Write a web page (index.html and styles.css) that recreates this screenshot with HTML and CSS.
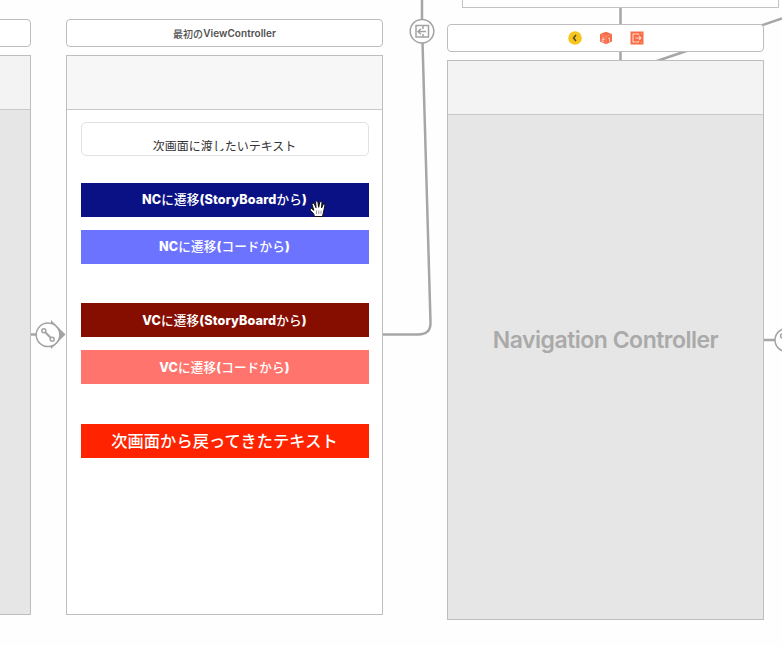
FILE: index.html
```
<!DOCTYPE html>
<html lang="ja">
<head>
<meta charset="utf-8">
<title>Storyboard</title>
<link rel="stylesheet" href="styles.css">
</head>
<body>
<main class="canvas">
  <svg class="connections" viewBox="0 0 782 646" fill="none" stroke="#a6a6a6" stroke-width="2.5">
    <path d="M422 0V20M422.5 42L430.5 322Q431 334.500 418 334.500H382"/>
    <path d="M620.500 7V62M654 62L782 18.500M30 334.500H37M763 340H775"/>
  </svg>

  <section class="scene scene-left">
    <header class="titlebar"></header>
    <div class="screen gray"><div class="navbar"></div></div>
  </section>

  <section class="scene scene-first">
    <header class="titlebar"><span class="jp">最初の</span>ViewController</header>
    <div class="screen">
      <div class="navbar pale"></div>
      <div class="content">
        <div class="field"><div class="clip">次画面に渡したいテキスト</div></div>
        <div class="button navy"><span>NC<span class="jp">に遷移</span>(StoryBoard<span class="jp">から</span>)</span></div>
        <div class="button blue"><span>NC<span class="jp">に遷移</span>(<span class="jp">コードから</span>)</span></div>
        <div class="button maroon"><span>VC<span class="jp">に遷移</span>(StoryBoard<span class="jp">から</span>)</span></div>
        <div class="button pink"><span>VC<span class="jp">に遷移</span>(<span class="jp">コードから</span>)</span></div>
        <div class="button red">次画面から戻ってきたテキスト</div>
      </div>
    </div>
  </section>

  <section class="scene scene-above"></section>

  <section class="scene scene-nav">
    <header class="titlebar icons">
      <svg width="14" height="14" viewBox="0 0 14 14"><circle cx="7" cy="7" r="6.800" fill="#f7c51e"/><path d="M8 4L5.500 7L8 10" fill="none" stroke="#514b32" stroke-width="1.500"/></svg>
      <svg width="14" height="14" viewBox="0 0 14 14"><path d="M7 .8L13 3V10.500L7 13.200L1 10.500V3Z" fill="#f66c48"/><path d="M1.500 3.500L7 5.500L12.500 3.500M7 5.500V13" fill="none" stroke="#fa9c83" stroke-width=".7"/><path d="M3 6.500L5 7.200V9L3 8.300V10.200L5 11M9 7.500L10.500 7V11" fill="none" stroke="#ffd0c2" stroke-width=".9"/></svg>
      <svg width="14" height="14" viewBox="0 0 14 14"><path d="M.5 .5H13.500V13.500H.5Z" fill="#f76b45"/><path d="M8.500 4V3H3V11H8.500V10M5.500 7H11M9 5L11 7L9 9" fill="none" stroke="#ffd8cb" stroke-width="1.100"/><path d="M11 2.500H12M11 11.500H12" stroke="#fbc47a"/></svg>
    </header>
    <div class="screen gray"><div class="navbar"></div><h1>Navigation Controller</h1></div>
  </section>

  <svg class="segues" viewBox="0 0 782 646" fill="none" stroke="#a3a3a3" stroke-width="1.500">
    <circle cx="422" cy="31.200" r="11.800" fill="#fff"/>
    <path d="M416 25.500H428.500V37H416ZM423 25.500V29M423 34V37M426 31.500H418M421 28.700L418 31.500L421 34.300"/>
    <path d="M51 320L65.500 334.500L51 349Z" fill="#a3a3a3" stroke="none"/>
    <circle cx="48" cy="334.800" r="11.800" fill="#fff"/>
    <circle cx="43.800" cy="330.800" r="2"/><circle cx="52.200" cy="339.200" r="2"/>
    <path d="M45.300 332.300L50.700 337.700" stroke-width="2"/>
    <circle cx="786.500" cy="340" r="11.500" fill="#fff"/><circle cx="782.500" cy="336" r="2"/>
  </svg>
  <svg class="hand" width="18" height="18" viewBox="0 0 18 18">
    <path d="M5.500 16.500L4.500 13.500L1.200 10.300Q.6 8.300 2.500 8.500L4.800 10.300L3 4.300Q3.100 2.300 5 3.200L7 7.700L6.600 2Q7.500 .3 8.900 1.900L9.700 7.300L10.800 2Q12 .8 13 2.300L12.500 8L14.300 4.200Q15.700 3.400 16 5L14.200 13.500L13.500 16.500Z" fill="#fff" stroke="#111" stroke-width="1" stroke-linejoin="round"/>
    <path d="M7.500 10.500V14M9.800 10.500V14M12 10.500V14" stroke="#777" stroke-width=".7"/>
  </svg>
</main>
</body>
</html>
```
FILE: styles.css
```
* { box-sizing: border-box; }
body { margin: 0; background: #fff; font-family: Inter, "Noto Sans CJK JP", sans-serif; }
.canvas { position: relative; width: 782px; height: 646px; overflow: hidden; background: #fefefe; }
.connections, .segues { position: absolute; left: 0; top: 0; width: 782px; height: 646px; }
.scene { position: absolute; width: 317px; display: flex; flex-direction: column; gap: 8px; }
.scene-left { left: -286px; top: 19px; }
.scene-first { left: 66px; top: 19px; }
.scene-nav { left: 447px; top: 24px; }
.scene-above { left: 462px; top: -10px; width: 317px; height: 18px; border: 1px solid #c2c2c2; background: #fff; }
.titlebar { height: 28px; border: 1px solid #bdbdbd; border-radius: 4px; background: #fff; display: flex; align-items: center; justify-content: center; font-size: 10px; font-weight: 600; letter-spacing: .05px; color: #505050; }
.jp { font-weight: 500; }
.icons { gap: 17px; padding: 0 0 0 1px; }
.screen { height: 560px; border: 1px solid #bebebe; background: #fff; display: flex; flex-direction: column; }
.gray { background: #e6e6e6; }
.navbar { height: 54px; flex: none; border-bottom: 1px solid #c8c8c8; background: #f3f3f3; }
.pale { background: #f7f7f7; }
.content { display: flex; flex-direction: column; padding: 12px 13.500px 0; }
.field { height: 34px; border: 1px solid #e2e2e2; border-radius: 5px; padding-top: 17px; margin-bottom: 26.500px; }
.clip { height: 11px; overflow: hidden; text-align: center; font-size: 12px; line-height: 14px; color: #333; }
.button { height: 34px; display: flex; align-items: center; justify-content: center; color: #fff; font-size: 12.600px; font-weight: 800; letter-spacing: .13px; white-space: nowrap; padding-bottom: 2px; }
.navy { background: #0a1184; margin-bottom: 13px; }
.blue { background: #6c74ff; margin-bottom: 39.500px; }
.maroon { background: #860e00; margin-bottom: 13px; }
.pink { background: #ff746d; margin-bottom: 40px; }
.red { background: #ff2300; font-size: 16.200px; font-weight: 500; padding-bottom: 3px; }
h1 { margin: 211px 0 0; text-align: center; font-size: 23px; line-height: 28px; font-weight: 600; letter-spacing: -.5px; color: #aaa; }
.hand { position: absolute; left: 309px; top: 200px; }
```
